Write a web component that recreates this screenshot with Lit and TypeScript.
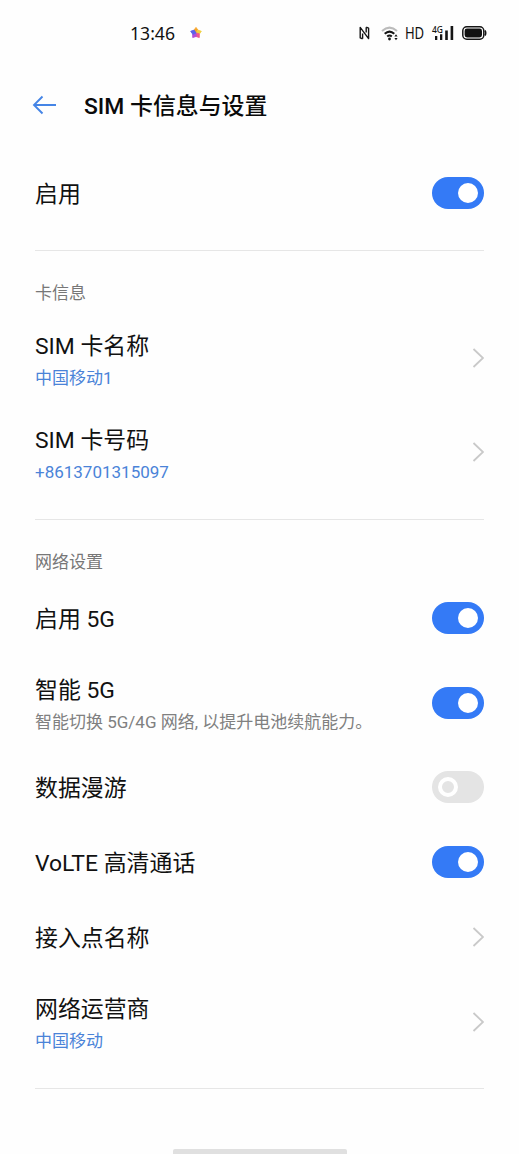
import { LitElement, html, css, svg, nothing } from "lit";
import { customElement, property } from "lit/decorators.js";

@customElement("toggle-switch")
class ToggleSwitch extends LitElement {
  @property({ type: Boolean }) on = false;
  static styles = css`
    :host { display: block; flex: none; }
    .track { box-sizing: border-box; width: 52px; height: 32px; border-radius: 16px; display: flex; align-items: center; padding: 0 6px; background: #e4e4e4; }
    .track.on { background: #347af6; justify-content: flex-end; }
    .knob { box-sizing: border-box; width: 20px; height: 20px; border-radius: 50%; border: 4px solid #fff; }
    .on .knob { background: #fff; }
  `;
  render() {
    return html`<div class="track ${this.on ? "on" : ""}"><div class="knob"></div></div>`;
  }
}

@customElement("setting-row")
class SettingRow extends LitElement {
  @property() label = "";
  @property() detail = "";
  @property() tone = "link";
  @property() control = "arrow";
  static styles = css`
    :host { display: block; }
    .row { box-sizing: border-box; height: 75px; display: flex; align-items: center; justify-content: space-between; padding-bottom: 1px; }
    .row.double { height: 94px; }
    .texts { padding-top: 3px; }
    .title { font-size: 22.9px; line-height: 34px; color: #111; white-space: nowrap; }
    .double .texts { padding-top: var(--double-offset, 7px); }
    .detail { font-size: 17px; line-height: 28px; white-space: nowrap; }
    .link { color: #4a83d8; }
    .muted { color: #808080; }
    .arrow { display: block; flex: none; }
  `;
  render() {
    return html`<div class="row ${this.detail ? "double" : ""}">
      <div class="texts">
        <div class="title">${this.label}</div>
        ${this.detail ? html`<div class="detail ${this.tone}">${this.detail}</div>` : nothing}
      </div>
      ${this.control === "arrow"
        ? html`<svg class="arrow" width="12" height="20" viewBox="0 0 12 20" fill="none" stroke="#c9c9c9" stroke-width="1.8"><path d="M1.5 1 11 10 1.5 19" /></svg>`
        : html`<toggle-switch ?on=${this.control === "on"}></toggle-switch>`}
    </div>`;
  }
}

const petals = ["#f5a623", "#8fce4a", "#ef5a6e", "#b558d8", "#5a5ce8"];
const starPoints = ["#f7a325", "#f0d040", "#ef5a8a", "#b04fd8", "#5a62ea"];

@customElement("app-root")
class AppRoot extends LitElement {
  static styles = css`
    :host { display: flex; flex-direction: column; box-sizing: border-box; height: 1154px; background: #fefefe; color: #111; font-family: Roboto, "Noto Sans CJK SC", sans-serif; overflow: hidden; }
    .status { height: 66px; flex: none; box-sizing: border-box; padding: 0 32px 0 130px; display: flex; align-items: center; }
    .time { font: 17.6px/24px "Noto Sans", sans-serif; width: 59px; }
    .icons { margin-left: auto; display: flex; align-items: center; }
    .icons svg { display: block; }
    .wifi { margin-left: 11px; }
    .hd { font: 16px/20px "Noto Sans", sans-serif; width: 19px; margin: 0 8px 0 6px; letter-spacing: -0.3px; transform: scaleX(.82); transform-origin: left; }
    .signal { font-family: "Noto Sans", sans-serif; overflow: visible; }
    .battery { margin-left: 8px; }
    header { height: 78px; flex: none; display: flex; align-items: center; padding-left: 32px; gap: 27px; }
    h1 { margin: 0; padding-top: 3px; font-size: 22.9px; line-height: 34px; font-weight: 500; color: #0a0a0a; white-space: nowrap; }
    main { padding: 0 35px; }
    .group { border-bottom: 1px solid #e6e6e6; }
    .first { padding: 12px 0 19px; }
    .cards { padding-bottom: 20px; }
    .network { padding-bottom: 19px; --double-offset: 5px; }
    .caption { height: 60px; box-sizing: border-box; padding-top: 27px; font-size: 17px; line-height: 30px; color: #777; }
    .network .caption { height: 61px; }
    .home { width: 174px; height: 5px; background: #e0e0e0; margin: auto auto 0; border-radius: 2px 2px 0 0; }
  `;
  render() {
    return html`
      <div class="status">
        <div class="time">13:46</div>
        <svg width="14" height="14" viewBox="-7 -7 14 14">
          ${starPoints.map((c, i) => svg`<path d="M0 0-2.2-2.6 0-5.6 2.2-2.6Z" fill=${c} stroke=${c} stroke-width=".8" stroke-linejoin="round" transform="rotate(${[0, 72, 144, 216, 288][i]})"/>`)}
        </svg>
        <div class="icons">
          <svg width="11" height="14" viewBox="0 0 11 14" fill="none" stroke="#151515" stroke-width="1.6" stroke-linejoin="round"><path d="M3.6 12.8 1.2 11.8V1.4L9.6 12.6V2.2L7.2 1.2M3.6 12.8V7.5M7.2 1.2V6.5" stroke-width="1.4" /></svg>
          <svg class="wifi" width="18" height="15" viewBox="0 0 18 15" fill="none" stroke-width="2">
            <path d="M1 5Q8.5-1.8 16 5" stroke="#bbb" /><path d="M3.7 7.8Q8.5 3.4 13.3 7.8" stroke="#151515" /><path d="M6.2 10.5Q8.5 8.5 10.8 10.5" stroke="#151515" />
            <circle cx="8.5" cy="13" r="1.4" fill="#151515" /><path d="m13.4 10.5 1.6-2.2 1.6 2.2ZM13.4 12l1.6 2.2 1.6-2.2Z" fill="#151515" />
          </svg>
          <div class="hd">HD</div>
          <svg class="signal" width="22" height="16" viewBox="0 0 22 16" fill="#151515">
            <text x="0" y="7.8" font-size="9.5" font-weight="500" textLength="11" lengthAdjust="spacingAndGlyphs">4G</text>
            <path d="M3 11h2.3v4H3zM8 9.2h2.3V15H8zM13.2 5.5h2.6V15h-2.6zM18.6 1h2.6v14h-2.6z" />
          </svg>
          <svg class="battery" width="25" height="14" viewBox="0 0 25 14"><rect x=".8" y=".8" width="21" height="12.4" rx="4" fill="none" stroke="#151515" stroke-width="1.5" /><rect x="2.6" y="2.6" width="17.4" height="8.8" rx="2.4" fill="#111" /><path d="M23 4.5q1.5 2.5 0 5" fill="none" stroke="#151515" stroke-width="1.5" /></svg>
        </div>
      </div>
      <header>
        <svg width="25" height="20" viewBox="0 0 25 20" fill="none" stroke="#4585e6" stroke-width="1.9"><path d="M10.5 1.5 2 10l8.5 8.5M2 10h22" /></svg>
        <h1>SIM 卡信息与设置</h1>
      </header>
      <main>
        <div class="group first"><setting-row label="启用" control="on"></setting-row></div>
        <div class="group cards">
          <div class="caption">卡信息</div>
          <setting-row label="SIM 卡名称" detail="中国移动1"></setting-row>
          <setting-row label="SIM 卡号码" detail="+8613701315097"></setting-row>
        </div>
        <div class="group network">
          <div class="caption">网络设置</div>
          <setting-row label="启用 5G" control="on"></setting-row>
          <setting-row label="智能 5G" detail="智能切换 5G/4G 网络, 以提升电池续航能力。" tone="muted" control="on"></setting-row>
          <setting-row label="数据漫游" control="off"></setting-row>
          <setting-row label="VoLTE 高清通话" control="on"></setting-row>
          <setting-row label="接入点名称"></setting-row>
          <setting-row label="网络运营商" detail="中国移动"></setting-row>
        </div>
      </main>
      <div class="home"></div>
    `;
  }
}
